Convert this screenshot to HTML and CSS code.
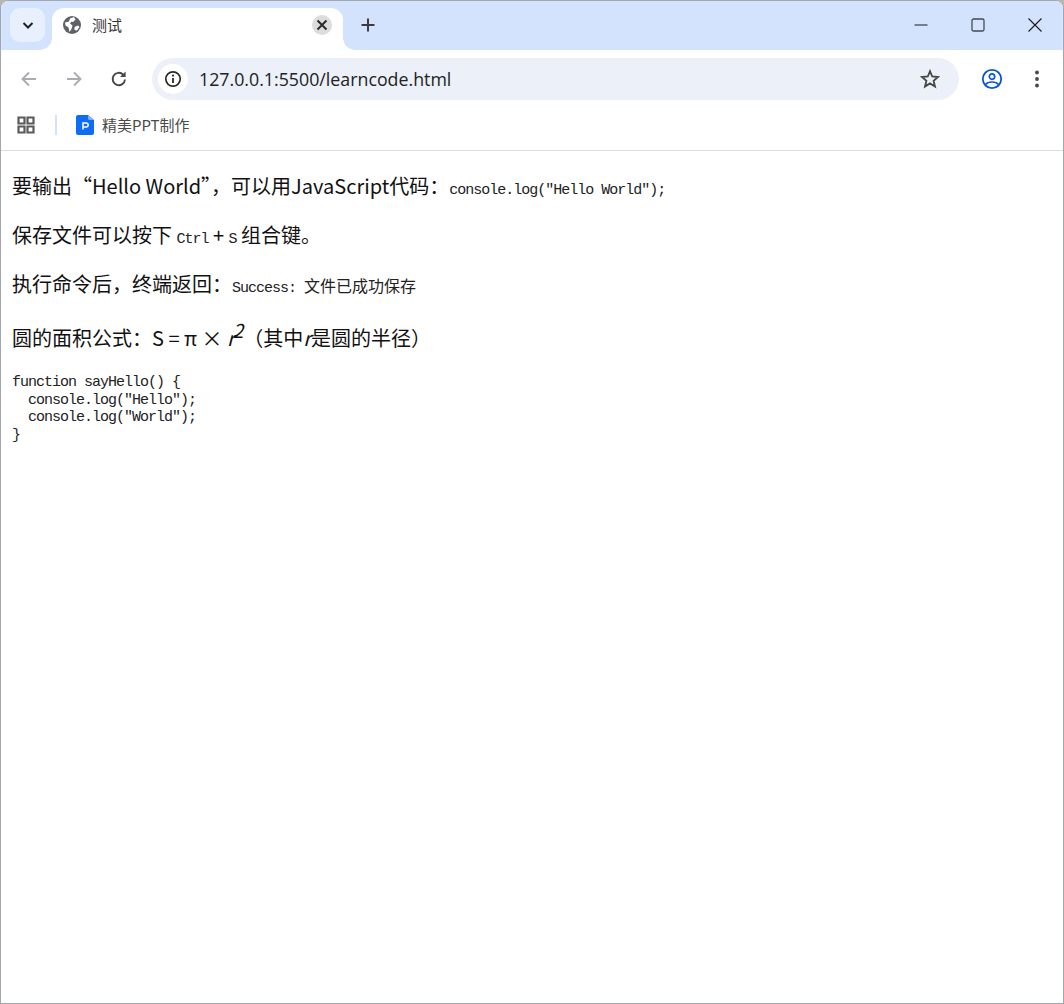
FILE: index.html
```html
<!DOCTYPE html>
<html lang="zh-CN">
<head>
  <meta charset="UTF-8">
  <title>测试</title>
  <link rel="stylesheet" href="styles.css">
</head>
<body>
  <div class="window">
    <div class="tabstrip">
      <button class="tab-search">
        <svg width="16" height="16" viewBox="0 0 16 16"><path d="M3.5 6 8 10.5 12.5 6" fill="none" stroke="#1f1f1f" stroke-width="2"/></svg>
      </button>
      <div class="tab">
        <svg class="globe" width="18" height="18" viewBox="0 0 18 18">
          <circle cx="9" cy="9" r="9" fill="#5f6368"/>
          <path d="M2 6.5 6 5.5 7 2.5 11 1 12.5 3.5 10 6 8.5 5.5 7 7.5 9.5 9.5 8.5 13 6.5 16 5.5 11.5 2.5 9.5ZM11.5 11 15 9.5 16.5 11 14 14.5 11.5 14Z" fill="#fff"/>
        </svg>
        <span class="tab-title">测试</span>
        <span class="tab-close">
          <svg width="12" height="12" viewBox="0 0 12 12"><path d="M1.5 1.5 10.5 10.5M10.5 1.5 1.5 10.5" stroke="#2b2b2b" stroke-width="2"/></svg>
        </span>
      </div>
      <svg class="new-tab" width="14" height="14" viewBox="0 0 14 14"><path d="M7 0.5V13.5M0.5 7H13.5" stroke="#3c3c3c" stroke-width="2"/></svg>
      <div class="win-controls">
        <svg width="14" height="14" viewBox="0 0 14 14"><path d="M0.5 7H13.5" stroke="#1a1a1a" stroke-width="1.2"/></svg>
        <svg width="14" height="14" viewBox="0 0 14 14"><rect x="1" y="1" width="12" height="12" rx="1.5" fill="none" stroke="#444a55" stroke-width="1.3"/></svg>
        <svg width="14" height="14" viewBox="0 0 14 14"><path d="M0.5 0.5 13.5 13.5M13.5 0.5 0.5 13.5" stroke="#1a1a1a" stroke-width="1.1"/></svg>
      </div>
    </div>

    <div class="toolbar">
      <svg class="nav" width="18" height="18" viewBox="0 0 18 18"><path d="M16 9H2.5M9 2.5 2.5 9 9 15.5" fill="none" stroke="#a9acb0" stroke-width="1.9"/></svg>
      <svg class="nav" width="18" height="18" viewBox="0 0 18 18"><path d="M2 9H15.5M9 2.5 15.5 9 9 15.5" fill="none" stroke="#a9acb0" stroke-width="1.9"/></svg>
      <svg class="nav" width="18" height="18" viewBox="0 0 18 18"><path d="M15 9.5A6.2 6.2 0 1 1 13.2 4.6" fill="none" stroke="#474747" stroke-width="1.9"/><path d="M15.6 1.4V7H10Z" fill="#474747"/></svg>
      <div class="omnibox">
        <span class="site-info">
          <svg width="18" height="18" viewBox="0 0 18 18"><circle cx="9" cy="9" r="7.2" fill="none" stroke="#2b2b2b" stroke-width="1.7"/><path d="M9 8V13" stroke="#2b2b2b" stroke-width="1.8"/><circle cx="9" cy="5.6" r="1.1" fill="#2b2b2b"/></svg>
        </span>
        <span class="url">127.0.0.1:5500/learncode.html</span>
        <svg class="star" width="20" height="20" viewBox="0 0 20 20"><path d="M10 2.2 12.2 7.5 18 8 13.6 11.8 15 17.5 10 14.4 5 17.5 6.4 11.8 2 8 7.8 7.5Z" fill="none" stroke="#474747" stroke-width="1.8"/></svg>
      </div>
      <svg class="profile" width="22" height="22" viewBox="0 0 22 22"><circle cx="11" cy="11" r="9.2" fill="none" stroke="#0b57d0" stroke-width="1.8"/><circle cx="11" cy="8.6" r="2.7" fill="none" stroke="#0b57d0" stroke-width="1.7"/><path d="M4.6 16.4C7 13.2 15 13.2 17.4 16.4" fill="none" stroke="#0b57d0" stroke-width="1.7"/></svg>
      <svg class="menu" width="6" height="18" viewBox="0 0 6 18"><circle cx="3" cy="2.5" r="1.9" fill="#474747"/><circle cx="3" cy="9" r="1.9" fill="#474747"/><circle cx="3" cy="15.5" r="1.9" fill="#474747"/></svg>
    </div>

    <div class="bookmarks">
      <svg width="18" height="18" viewBox="0 0 18 18"><path d="M1.5 1.5H7.5V7.5H1.5ZM10.5 1.5H16.5V7.5H10.5ZM1.5 10.5H7.5V16.5H1.5ZM10.5 10.5H16.5V16.5H10.5Z" fill="none" stroke="#5a5a5a" stroke-width="2.2"/></svg>
      <span class="bm-sep"></span>
      <svg class="bm-icon" width="18" height="20" viewBox="0 0 18 20"><path d="M2 0H12L18 5V18A2 2 0 0 1 16 20H2A2 2 0 0 1 0 18V2A2 2 0 0 1 2 0Z" fill="#0f6cf5"/><path d="M12 0 18 5H13.5A1.5 1.5 0 0 1 12 3.5Z" fill="#7db0fb"/><path d="M7 14.5V8H10.2A1.9 1.9 0 0 1 10.2 11.9H7" fill="none" stroke="#fff" stroke-width="1.5"/></svg>
      <span class="bm-label">精美PPT制作</span>
    </div>

    <main class="content">
      <p>要输出“Hello World”，可以用JavaScript代码：<code>console.log("Hello World");</code></p>
      <p>保存文件可以按下 <kbd>Ctrl</kbd> + <kbd>S</kbd> 组合键。</p>
      <p>执行命令后，终端返回：<samp>Success: <span class="cjk">文件已成功保存</span></samp></p>
      <p class="formula">圆的面积公式：<span class="math">S = π <span class="times">×</span> <i>r</i><sup>2</sup></span>（其中<i>r</i>是圆的半径）</p>
      <pre>function sayHello() {
  console.log("Hello");
  console.log("World");
}</pre>
    </main>
  </div>
</body>
</html>
```

FILE: styles.css
```css
* {
  box-sizing: border-box;
}

html, body {
  height: 100%;
}

body {
  margin: 0;
  background: #b9b6b0;
}

.window {
  height: 1004px;
  display: flex;
  flex-direction: column;
  background: #fff;
  border: 1px solid #a3a7ad;
  border-radius: 8px 8px 0 0;
  overflow: hidden;
}

.tabstrip {
  height: 49px;
  flex: none;
  display: flex;
  align-items: flex-start;
  background: #d3e3fd;
}

.tab-search {
  width: 35px;
  height: 34px;
  margin: 7px 0 0 9px;
  padding: 0;
  display: flex;
  align-items: center;
  justify-content: center;
  border: 0;
  border-radius: 10px;
  background: #e9f0fd;
}

.tab {
  position: relative;
  width: 291px;
  height: 42px;
  margin: 7px 0 0 7px;
  padding: 0 11px 8px 11px;
  display: flex;
  align-items: center;
  background: #fff;
  border-radius: 12px 12px 0 0;
}

.tab::before,
.tab::after {
  content: "";
  position: absolute;
  bottom: 0;
  width: 12px;
  height: 12px;
}

.tab::before {
  left: -12px;
  background: radial-gradient(circle at 0 0, transparent 11.5px, #fff 12px);
}

.tab::after {
  right: -12px;
  background: radial-gradient(circle at 100% 0, transparent 11.5px, #fff 12px);
}

.tab-title {
  margin-left: 11px;
  font: 15px/20px "Noto Sans CJK SC", sans-serif;
  color: #333;
}

.tab-close {
  width: 20px;
  height: 20px;
  margin-left: auto;
  display: flex;
  align-items: center;
  justify-content: center;
  border-radius: 50%;
  background: #dcdcdc;
}

.new-tab {
  margin: 17px 0 0 18px;
}

.win-controls {
  margin: 17px 21px 0 auto;
  display: flex;
  gap: 43px;
}

.toolbar {
  height: 50px;
  flex: none;
  padding: 8px 22px 0 19px;
  display: flex;
  align-items: center;
  background: #fff;
  border-radius: 12px 12px 0 0;
}

.nav {
  margin-right: 27px;
}

.nav:nth-child(3) {
  margin-right: 24px;
}

.omnibox {
  width: 807px;
  height: 42px;
  padding: 0 19px 0 6px;
  display: flex;
  align-items: center;
  background: #ebf0f9;
  border-radius: 21px;
}

.site-info {
  width: 30px;
  height: 30px;
  display: flex;
  align-items: center;
  justify-content: center;
  border-radius: 50%;
  background: #fff;
}

.url {
  margin-left: 11px;
  font: 17.8px "Open Sans", sans-serif;
  color: #222;
}

.star {
  margin-left: auto;
}

.profile {
  margin-left: 22px;
}

.menu {
  margin-left: 31px;
}

.bookmarks {
  height: 51px;
  flex: none;
  padding-left: 16px;
  display: flex;
  align-items: center;
  border-bottom: 1px solid #dadce0;
}

.bm-sep {
  width: 2px;
  height: 20px;
  margin-left: 20px;
  background: #d3e3fd;
}

.bm-icon {
  margin-left: 19px;
}

.bm-label {
  margin-left: 8px;
  font: 15px/20px "Noto Sans CJK SC", sans-serif;
  color: #4a4a4a;
}

.content {
  flex: 1;
  padding: 0 11px;
  font-family: "Noto Sans CJK SC", sans-serif;
  font-size: 20px;
  color: #111;
}

.content p {
  margin: 20px 0;
}

code, kbd, samp, pre {
  font-family: "Liberation Mono", monospace;
  font-size: 15px;
  letter-spacing: -1px;
  color: #222;
}

.cjk {
  font-family: "Noto Sans CJK SC", sans-serif;
  font-size: 16px;
  letter-spacing: 0;
}

.times {
  font-size: 21px;
}

.math i {
  letter-spacing: -2px;
}

.content .formula {
  margin-bottom: 17px;
  line-height: 38px;
}

.formula sup {
  font-size: 19px;
  font-style: italic;
  line-height: 0;
  vertical-align: 8px;
}

pre {
  margin: 15px 0;
  line-height: 17.5px;
}
```
